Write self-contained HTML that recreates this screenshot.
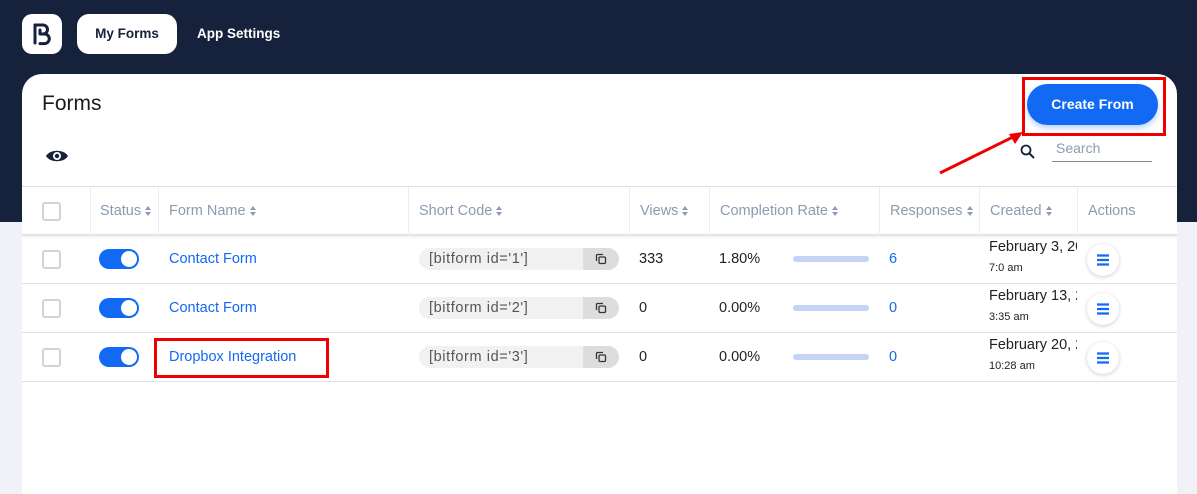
<!DOCTYPE html>
<html><head><meta charset="utf-8"><style>
*{box-sizing:border-box;margin:0;padding:0}
body{width:1197px;height:475px;overflow:hidden;background:#f1f2f8;font-family:"Liberation Sans",sans-serif;position:relative}
.top{position:absolute;left:0;top:0;width:1197px;height:222px;background:#16213b}
.logo{position:absolute;left:22px;top:14px;width:40px;height:40px;background:#fff;border-radius:10px}
.tab{position:absolute;top:14px;height:40px;line-height:40px;font-size:14px;font-weight:bold;color:#fff}
.card{position:absolute;left:22px;top:74px;width:1155px;height:420px;background:#fff;border-radius:20px 20px 0 0;overflow:hidden}
.abs{position:absolute}
.hd{position:absolute;top:113px;height:48px;line-height:48px;color:#8d9ab3;font-size:14.5px;border-left:1px solid #eceef4;white-space:nowrap}
.hd svg{vertical-align:middle;margin-left:4px}
.row{position:absolute;left:0;width:1155px;height:49px;border-bottom:1px solid #dfe1ea}
.cb{position:absolute;left:20px;width:19px;height:19px;border:2px solid #d0d3da;border-radius:3px}
.tg{position:absolute;left:77px;width:40px;height:20px;background:#1269f3;border-radius:10px}
.tg:after{content:"";position:absolute;right:2px;top:2px;width:16px;height:16px;background:#fff;border-radius:50%}
.t{position:absolute;font-size:14.5px}
.sc{position:absolute;left:397px;width:200px;height:22px;border-radius:11px;background:#f1f1f1;overflow:hidden;font-size:14.5px;color:#555;line-height:22px;padding-left:10px;letter-spacing:.6px}
.sc b{position:absolute;right:0;top:0;width:36px;height:22px;background:#ddd}
.bar{position:absolute;left:771px;width:76px;height:6px;background:#c6d3f7;border-radius:3px}
.act{position:absolute;left:1065px;width:32px;height:32px;border-radius:50%;background:#fff;box-shadow:0 1px 4px rgba(0,0,0,.2)}
</style></head><body>
<div class="top"></div>
<div class="logo"><svg width="40" height="40" viewBox="0 0 40 40"><path d="M13 11v18" stroke="#16213b" stroke-width="3" stroke-linecap="round"/><path d="M13 11h8a4.5 4.5 0 0 1 0 9h-3v-0M18 16v4h4.5a4.8 4.8 0 0 1 0 9.6H18" stroke="#16213b" stroke-width="3" fill="none" stroke-linecap="round" stroke-linejoin="round"/></svg></div>
<div class="tab" style="left:77px;width:100px;background:#fff;color:#16213b;border-radius:12px;text-align:center;font-size:13.5px">My Forms</div>
<div class="tab" style="left:197px;font-size:13.5px">App Settings</div>
<div class="card">
<div class="abs" style="left:20px;top:18px;font-size:21px;color:#1b1b1b">Forms</div>
<svg class="abs" style="left:23px;top:74px" width="24" height="16" viewBox="0 0 24 16"><path d="M1 8C5 1 19 1 23 8C19 15 5 15 1 8Z" fill="#16213b"/><circle cx="12" cy="8" r="4" fill="#fff"/><circle cx="12" cy="8" r="2.2" fill="#16213b"/></svg>
<div class="abs" style="left:1005px;top:10px;width:131px;height:41px;background:#1269f3;border-radius:21px;color:#fff;font-weight:bold;font-size:14px;line-height:41px;text-align:center;box-shadow:0 3px 6px rgba(18,105,243,.3)">Create From</div>
<div class="abs" style="left:1000px;top:3px;width:144px;height:59px;border:3px solid #e00"></div>
<svg class="abs" style="left:915px;top:54px;" width="90" height="48"><path d="M3 45L82 6" stroke="#e00" stroke-width="3"/><path d="M86 4L72 6L78 16Z" fill="#e00"/></svg>
<svg class="abs" style="left:998px;top:70px" width="16" height="16"><circle cx="6" cy="6" r="4.5" stroke="#16213b" stroke-width="1.8" fill="none"/><path d="M9.5 9.5L14 14" stroke="#16213b" stroke-width="2"/></svg>
<div class="abs" style="left:1030px;top:66px;width:100px;height:22px;border-bottom:1px solid #888;color:#8d9ab3;font-size:14px;padding-left:4px">Search</div>
<div class="abs" style="left:0;top:112px;width:1155px;height:1px;background:#dfe1ea"></div>
<div class="abs" style="left:0;top:160px;width:1155px;height:2px;background:#e2e4ec;box-shadow:0 1px 3px rgba(0,0,0,.1)"></div>
<div class="cb" style="top:128px"></div>
<div class="hd" style="left:68px;padding-left:9px;width:68px">Status<svg width="6" height="10"><path d="M0 4L3 0L6 4ZM0 6L3 10L6 6Z" fill="#8d9ab3"/></svg></div>
<div class="hd" style="left:136px;padding-left:10px;width:250px">Form Name<svg width="6" height="10"><path d="M0 4L3 0L6 4ZM0 6L3 10L6 6Z" fill="#8d9ab3"/></svg></div>
<div class="hd" style="left:386px;padding-left:10px;width:221px">Short Code<svg width="6" height="10"><path d="M0 4L3 0L6 4ZM0 6L3 10L6 6Z" fill="#8d9ab3"/></svg></div>
<div class="hd" style="left:607px;padding-left:10px;width:80px">Views<svg width="6" height="10"><path d="M0 4L3 0L6 4ZM0 6L3 10L6 6Z" fill="#8d9ab3"/></svg></div>
<div class="hd" style="left:687px;padding-left:10px;width:170px">Completion Rate<svg width="6" height="10"><path d="M0 4L3 0L6 4ZM0 6L3 10L6 6Z" fill="#8d9ab3"/></svg></div>
<div class="hd" style="left:857px;padding-left:10px;width:100px">Responses<svg width="6" height="10"><path d="M0 4L3 0L6 4ZM0 6L3 10L6 6Z" fill="#8d9ab3"/></svg></div>
<div class="hd" style="left:957px;padding-left:10px;width:98px">Created<svg width="6" height="10"><path d="M0 4L3 0L6 4ZM0 6L3 10L6 6Z" fill="#8d9ab3"/></svg></div>
<div class="hd" style="left:1055px;padding-left:10px;width:100px">Actions</div>

<div class="row" style="top:161px"></div>
<div class="row" style="top:210px"></div>
<div class="row" style="top:259px"></div>

<svg width="0" height="0" style="position:absolute"><defs><symbol id="cp" viewBox="0 0 12 12"><path d="M1.5 8V2.5a1 1 0 0 1 1-1H8" stroke="#333" stroke-width="1.3" fill="none"/><rect x="4" y="4" width="6.5" height="6.5" rx="1.2" stroke="#333" stroke-width="1.3" fill="none"/></symbol><symbol id="mn" viewBox="0 0 14 12"><path d="M1 1.5h12M1 6h12M1 10.5h12" stroke="#1269f3" stroke-width="2.2"/></symbol></defs></svg>

<div class="cb" style="top:176px"></div><div class="tg" style="top:175px"></div>
<div class="t" style="left:147px;top:177px;color:#1269f3">Contact Form</div>
<div class="sc" style="top:174px">[bitform id='1']<b><svg width="12" height="12" style="margin:5px 12px"><use href="#cp"/></svg></b></div>
<div class="t" style="left:617px;top:177px;color:#222">333</div>
<div class="t" style="left:697px;top:177px;color:#222">1.80%</div>
<div class="bar" style="top:182px"></div>
<div class="t" style="left:867px;top:177px;color:#1269f3">6</div>
<div class="t" style="left:967px;top:165px;color:#222;white-space:nowrap;width:88px;overflow:hidden">February 3, 2023</div>
<div class="t" style="left:967px;top:188px;font-size:11px;color:#222">7:0 am</div>
<div class="act" style="top:170px"><svg width="14" height="12" style="margin:10px 9px"><use href="#mn"/></svg></div>

<div class="cb" style="top:225px"></div><div class="tg" style="top:224px"></div>
<div class="t" style="left:147px;top:226px;color:#1269f3">Contact Form</div>
<div class="sc" style="top:223px">[bitform id='2']<b><svg width="12" height="12" style="margin:5px 12px"><use href="#cp"/></svg></b></div>
<div class="t" style="left:617px;top:226px;color:#222">0</div>
<div class="t" style="left:697px;top:226px;color:#222">0.00%</div>
<div class="bar" style="top:231px"></div>
<div class="t" style="left:867px;top:226px;color:#1269f3">0</div>
<div class="t" style="left:967px;top:214px;color:#222;white-space:nowrap;width:88px;overflow:hidden">February 13, 2023</div>
<div class="t" style="left:967px;top:237px;font-size:11px;color:#222">3:35 am</div>
<div class="act" style="top:219px"><svg width="14" height="12" style="margin:10px 9px"><use href="#mn"/></svg></div>

<div class="cb" style="top:274px"></div><div class="tg" style="top:273px"></div>
<div class="t" style="left:147px;top:275px;color:#1269f3">Dropbox Integration</div>
<div class="abs" style="left:132px;top:264px;width:175px;height:40px;border:3px solid #e00"></div>
<div class="sc" style="top:272px">[bitform id='3']<b><svg width="12" height="12" style="margin:5px 12px"><use href="#cp"/></svg></b></div>
<div class="t" style="left:617px;top:275px;color:#222">0</div>
<div class="t" style="left:697px;top:275px;color:#222">0.00%</div>
<div class="bar" style="top:280px"></div>
<div class="t" style="left:867px;top:275px;color:#1269f3">0</div>
<div class="t" style="left:967px;top:263px;color:#222;white-space:nowrap;width:88px;overflow:hidden">February 20, 2023</div>
<div class="t" style="left:967px;top:286px;font-size:11px;color:#222">10:28 am</div>
<div class="act" style="top:268px"><svg width="14" height="12" style="margin:10px 9px"><use href="#mn"/></svg></div>
</div>
</body></html>
